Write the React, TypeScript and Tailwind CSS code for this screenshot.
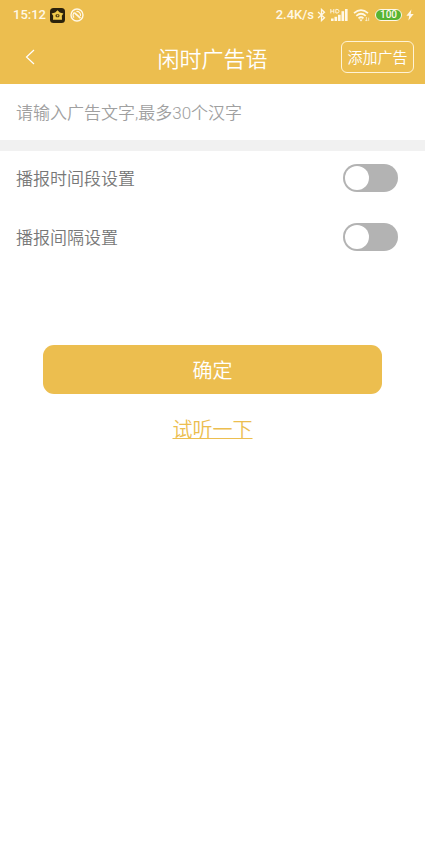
import { useState } from 'react';

function StatusBar() {
  return (
    <div className="flex h-[30px] items-center justify-between pl-[13px] pr-[11px] font-[Roboto,'Noto_Sans_CJK_SC',sans-serif] text-[13px] font-medium leading-4 text-[#fff8e6]">
      <div className="flex items-center gap-1">
        <span>15:12</span>
        <svg className="h-[15px] w-[15px]" viewBox="0 0 15 15" aria-hidden="true">
          <rect width="15" height="15" rx="3.5" fill="#2b220c" />
          <path d="M7.5 2.2 9.8 4.6 13.4 5.4 11.8 7.8 12 11.8H3L3.2 7.8 1.6 5.4 5.2 4.6Z" fill="#f0cb4c" />
          <rect x="5.6" y="6.2" width="3.8" height="3" rx="1" fill="#5a4413" />
          <path d="M7 6.8 8.7 7.7 7 8.6Z" fill="#f0cb4c" />
        </svg>
        <svg className="ml-px h-[14px] w-[14px]" viewBox="0 0 14 14" fill="none" stroke="currentColor" aria-hidden="true">
          <circle cx="7" cy="7" r="6" strokeWidth="1.4" />
          <path d="M4 9.6A3.6 3.6 0 0 1 4.6 4.2M6.4 3.5A3.6 3.6 0 0 1 10.4 8" strokeWidth="1.2" />
          <path d="M4.6 4.8 10.4 10.2" strokeWidth="1.8" />
        </svg>
      </div>
      <div className="flex items-center">
        <span>2.4K/s</span>
        <svg className="ml-[3px] h-[14px] w-[9px]" viewBox="0 0 9 14" fill="none" stroke="currentColor" strokeWidth="1.3" aria-hidden="true">
          <path d="M1 4 7.5 9.8 4.5 12.6V1.4L7.5 4.2 1 10" />
        </svg>
        <svg className="ml-1 h-[14px] w-[18px]" viewBox="0 0 18 14" fill="currentColor" aria-hidden="true">
          <path d="M.8 1V5.4M3.8 1V5.4M.8 3.2H3.8M5.8 1.4V5H7Q9 5 9 3.2T7 1.4Z" fill="none" stroke="currentColor" strokeWidth=".9" />
          <rect x="1" y="10.5" width="2.6" height="2.5" />
          <rect x="4.5" y="8.8" width="2.6" height="4.2" />
          <rect x="8" y="6.8" width="2.6" height="6.2" />
          <rect x="11.5" y="3.2" width="2.6" height="9.8" />
          <rect x="15" y="1" width="2.6" height="12" />
        </svg>
        <svg className="ml-[5px] h-[14px] w-[17px]" viewBox="0 0 17 14" fill="none" stroke="currentColor" strokeWidth="1.7" aria-hidden="true">
          <path d="M1 5.2Q8 -1 15 5.2M3.3 7.9Q8 3.6 12.7 7.9M5.5 10.3Q8 8.2 10.5 10.3" />
          <path d="M6.3 11.4H9.7L8 13.4Z" fill="currentColor" stroke="none" />
          <path d="M13.4 9V13M12.2 11.8 13.4 13.1 14.6 11.8M15.7 13V9.6" strokeWidth=".7" />
        </svg>
        <span className="ml-[5px] flex h-3 w-[27px] items-center justify-center rounded-full border border-[#fff8e6] bg-[#56b432] text-[10px] leading-3">
          100
        </span>
        <svg className="ml-1 h-3 w-[8px]" viewBox="0 0 8 12" fill="currentColor" aria-hidden="true">
          <path d="M5.4 .6 .4 6.8H3.2L2.4 11.6 7.7 5H4.7Z" />
        </svg>
      </div>
    </div>
  );
}

function NavBar() {
  return (
    <div className="grid h-[54px] grid-cols-[1fr_auto_1fr] items-center px-[11px] text-white">
      <button type="button" aria-label="返回" className="flex h-8 w-[38px] items-center justify-center justify-self-start">
        <svg className="h-4 w-[10px]" viewBox="0 0 10 16" fill="none" stroke="currentColor" strokeWidth="1.2" aria-hidden="true">
          <path d="M9 1 1.5 8 9 15" />
        </svg>
      </button>
      <h1 className="text-[22px] font-[350] leading-8">闲时广告语</h1>
      <button
        type="button"
        className="h-8 w-[73px] justify-self-end whitespace-nowrap rounded-md border border-[#fff3d6] text-[15px] leading-5"
      >
        添加广告
      </button>
    </div>
  );
}

type SwitchRowProps = {
  id: string;
  label: string;
};

function SwitchRow({ id, label }: SwitchRowProps) {
  const [on, setOn] = useState(false);

  return (
    <div className="flex h-7 items-center justify-between">
      <label htmlFor={id} className="text-[17px] leading-6 text-[#777777]">
        {label}
      </label>
      <input
        id={id}
        type="checkbox"
        role="switch"
        checked={on}
        onChange={(e) => setOn(e.target.checked)}
        className="flex h-7 w-[55px] appearance-none items-center rounded-full bg-[#b3b3b3] px-[2px] before:h-6 before:w-6 before:rounded-full before:bg-white before:content-[''] checked:justify-end checked:bg-[#ecbe4f]"
      />
    </div>
  );
}

export default function App() {
  const [text, setText] = useState('');

  return (
    <div className="min-h-screen bg-white font-['Noto_Sans_CJK_SC',sans-serif] font-[350]">
      <header className="bg-[#ecbe4f]">
        <StatusBar />
        <NavBar />
      </header>
      <main>
        <input
          type="text"
          aria-label="广告文字"
          maxLength={30}
          value={text}
          onChange={(e) => setText(e.target.value)}
          placeholder="请输入广告文字,最多30个汉字"
          className="block h-14 w-full px-4 pt-[2px] font-[Roboto,'Noto_Sans_CJK_SC',sans-serif] text-[17px] text-[#777777] outline-none placeholder:text-[#a0a0a0]"
        />
        <div className="h-[11px] bg-[#f1f1f1]" />
        <div className="flex flex-col gap-[31px] pl-4 pr-[27px] pt-[13px]">
          <SwitchRow id="period" label="播报时间段设置" />
          <SwitchRow id="interval" label="播报间隔设置" />
        </div>
        <div className="flex flex-col items-center gap-5 px-[43px] pt-[94px]">
          <button type="button" className="h-[49px] w-full rounded-[11px] bg-[#ecbe4f] text-[20px] leading-7 text-white">
            确定
          </button>
          <a href="#preview" className="text-[20px] leading-[30px] text-[#ecbe4f] underline decoration-1">
            试听一下
          </a>
        </div>
      </main>
    </div>
  );
}
